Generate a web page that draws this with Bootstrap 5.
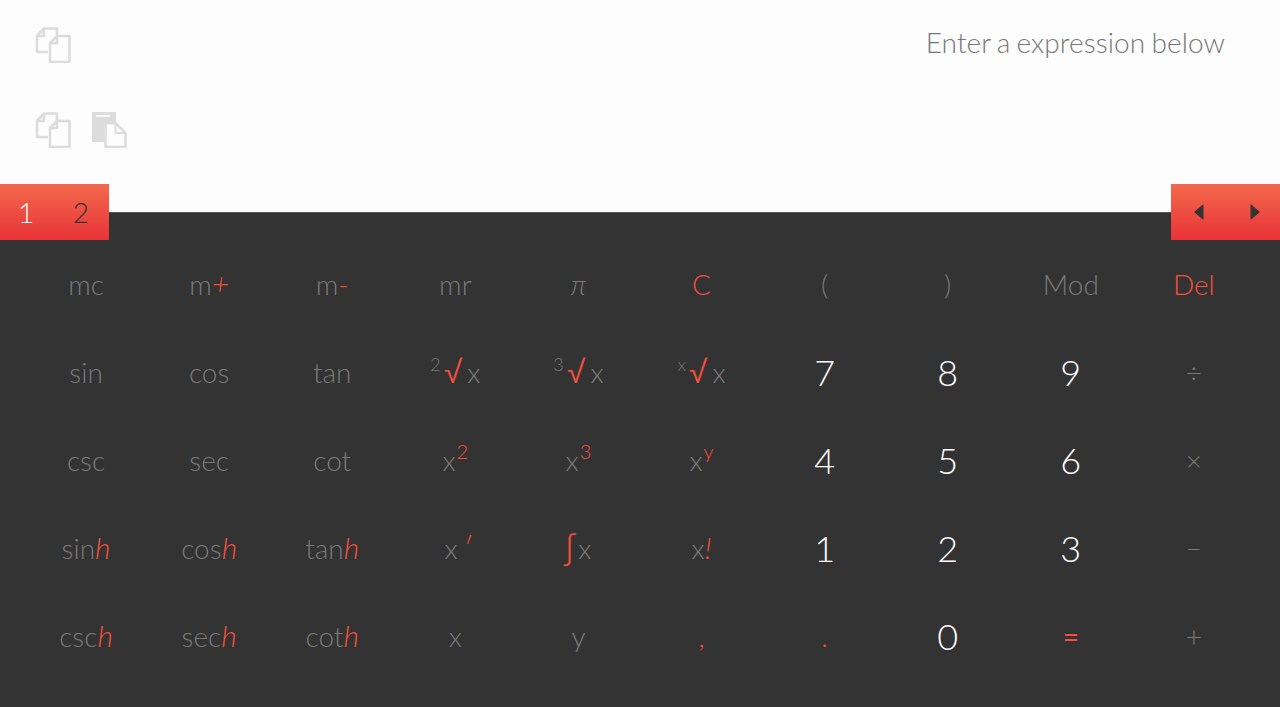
<!DOCTYPE html>
<html lang="en">
<head>
<meta charset="utf-8">
<title>Calculator</title>
<link href="https://cdn.jsdelivr.net/npm/bootstrap@5.3.0/dist/css/bootstrap.min.css" rel="stylesheet">
<style>
html,body{height:100%;margin:0;overflow:hidden}
body{font-family:"Lato",sans-serif;font-weight:300;background:#333}
.top-panel{height:212px;background:#fdfdfd;padding:27px 55px 0 35px}
.tool-stack{gap:49px}
.tool-row{gap:20px;height:36px}
.tool-row svg{width:36px;height:36px;display:block}
.prompt{font-size:28px;line-height:30px;color:#777;letter-spacing:.1px;word-spacing:-1.6px}
.dark-panel{background:#333;border-top:1px solid #555;height:495px}
.tab-strip{margin-top:-29px;height:56px;position:relative}
.tab-box{width:109px;height:56px;background:linear-gradient(#f2694c,#e93338);font-size:28px;padding:0 20px 0 18px;color:#333}
.tab-box.right{padding:0 20px 0 23px;margin:0}
.tab-on{color:#fff}
.keys{display:grid;grid-template-columns:repeat(10,123.1px);grid-auto-rows:88px;padding:0 0 0 24.5px}
.key{font-size:28px;color:#7a7a7a;white-space:nowrap;position:relative}
.key i{font-style:italic;font-weight:300;font-size:30px;line-height:1;color:#f4503a}
.red{color:#f4503a}
.key.num{color:#fff;font-size:36px}
.sup{font-size:20px;line-height:1;position:relative;top:-12px;margin-left:1px}
.sup-g{font-size:18px;line-height:1;position:relative;top:-12px;color:#7a7a7a;margin-right:3px}
.rt{font-family:"Roboto",sans-serif;font-size:36px;font-weight:300;line-height:1;margin-right:4px}
.intg{font-family:"Roboto",sans-serif;font-size:34px;font-weight:300;line-height:1;margin-right:4px}
.key i.prime{margin:0 -5px 0 5px}
.small-op{font-size:28px}
.eq-key{font-weight:400}
</style>
</head>
<body>
<div class="top-panel d-flex justify-content-between">
  <div class="d-flex flex-column tool-stack">
    <div class="d-flex tool-row">
      <svg viewBox="0 0 36 36" fill="none" stroke="#dcdcdc" stroke-width="2.600" stroke-linejoin="round"><path d="M13 25H2V9l7-7.500h13V9"/><path d="M2 9h7V2"/><path d="M15 16l7-7h12.500v26H15z"/><path d="M15 16h7V9"/></svg>
    </div>
    <div class="d-flex tool-row">
      <svg viewBox="0 0 36 36" fill="none" stroke="#dcdcdc" stroke-width="2.600" stroke-linejoin="round"><path d="M13 25H2V9l7-7.500h13V9"/><path d="M2 9h7V2"/><path d="M15 16l7-7h12.500v26H15z"/><path d="M15 16h7V9"/></svg>
      <svg viewBox="0 0 36 36"><path fill="#dcdcdc" d="M1 0h24v10H13.500v20H1z"/><rect x="5" y="3" width="14" height="1.800" fill="#fdfdfd"/><path fill="#fdfdfd" stroke="#dcdcdc" stroke-width="2.600" stroke-linejoin="round" d="M14.500 11h10l10 10v14h-20z"/><path fill="none" stroke="#dcdcdc" stroke-width="2" d="M24.500 11v10h10"/></svg>
    </div>
  </div>
  <div class="prompt">Enter a expression below</div>
</div>
<div class="dark-panel">
  <div class="tab-strip d-flex justify-content-between">
    <div class="tab-box d-flex justify-content-between align-items-center"><span class="tab-on">1</span><span>2</span></div>
    <div class="tab-box right d-flex justify-content-between align-items-center">
      <svg width="10" height="16" viewBox="0 0 10 16"><path fill="#333" d="M9.500 0v16L0 8z"/></svg>
      <svg width="10" height="16" viewBox="0 0 10 16"><path fill="#333" d="M.5 0v16L10 8z"/></svg>
    </div>
  </div>
  <div class="keys">
    <div class="key d-flex justify-content-center align-items-center">mc</div>
    <div class="key d-flex justify-content-center align-items-center"><span>m<i>+</i></span></div>
    <div class="key d-flex justify-content-center align-items-center"><span>m<span class="red">-</span></span></div>
    <div class="key d-flex justify-content-center align-items-center">mr</div>
    <div class="key d-flex justify-content-center align-items-center"><em>π</em></div>
    <div class="key red d-flex justify-content-center align-items-center">C</div>
    <div class="key d-flex justify-content-center align-items-center">(</div>
    <div class="key d-flex justify-content-center align-items-center">)</div>
    <div class="key d-flex justify-content-center align-items-center">Mod</div>
    <div class="key red d-flex justify-content-center align-items-center">Del</div>

    <div class="key d-flex justify-content-center align-items-center">sin</div>
    <div class="key d-flex justify-content-center align-items-center">cos</div>
    <div class="key d-flex justify-content-center align-items-center">tan</div>
    <div class="key d-flex justify-content-center align-items-center"><span><span class="sup-g">2</span><span class="rt red">√</span>x</span></div>
    <div class="key d-flex justify-content-center align-items-center"><span><span class="sup-g">3</span><span class="rt red">√</span>x</span></div>
    <div class="key d-flex justify-content-center align-items-center"><span><span class="sup-g">x</span><span class="rt red">√</span>x</span></div>
    <div class="key num d-flex justify-content-center align-items-center">7</div>
    <div class="key num d-flex justify-content-center align-items-center">8</div>
    <div class="key num d-flex justify-content-center align-items-center">9</div>
    <div class="key small-op d-flex justify-content-center align-items-center">÷</div>

    <div class="key d-flex justify-content-center align-items-center">csc</div>
    <div class="key d-flex justify-content-center align-items-center">sec</div>
    <div class="key d-flex justify-content-center align-items-center">cot</div>
    <div class="key d-flex justify-content-center align-items-center"><span>x<span class="sup red">2</span></span></div>
    <div class="key d-flex justify-content-center align-items-center"><span>x<span class="sup red">3</span></span></div>
    <div class="key d-flex justify-content-center align-items-center"><span>x<span class="sup red">y</span></span></div>
    <div class="key num d-flex justify-content-center align-items-center">4</div>
    <div class="key num d-flex justify-content-center align-items-center">5</div>
    <div class="key num d-flex justify-content-center align-items-center">6</div>
    <div class="key small-op d-flex justify-content-center align-items-center">×</div>

    <div class="key d-flex justify-content-center align-items-center"><span>sin<i>h</i></span></div>
    <div class="key d-flex justify-content-center align-items-center"><span>cos<i>h</i></span></div>
    <div class="key d-flex justify-content-center align-items-center"><span>tan<i>h</i></span></div>
    <div class="key d-flex justify-content-center align-items-center"><span>x<i class="prime">′</i></span></div>
    <div class="key d-flex justify-content-center align-items-center"><span><span class="intg red">∫</span>x</span></div>
    <div class="key d-flex justify-content-center align-items-center"><span>x<i>!</i></span></div>
    <div class="key num d-flex justify-content-center align-items-center">1</div>
    <div class="key num d-flex justify-content-center align-items-center">2</div>
    <div class="key num d-flex justify-content-center align-items-center">3</div>
    <div class="key small-op d-flex justify-content-center align-items-center">−</div>

    <div class="key d-flex justify-content-center align-items-center"><span>csc<i>h</i></span></div>
    <div class="key d-flex justify-content-center align-items-center"><span>sec<i>h</i></span></div>
    <div class="key d-flex justify-content-center align-items-center"><span>cot<i>h</i></span></div>
    <div class="key d-flex justify-content-center align-items-center">x</div>
    <div class="key d-flex justify-content-center align-items-center">y</div>
    <div class="key red d-flex justify-content-center align-items-center">,</div>
    <div class="key red d-flex justify-content-center align-items-center">.</div>
    <div class="key num d-flex justify-content-center align-items-center">0</div>
    <div class="key red small-op eq-key d-flex justify-content-center align-items-center">=</div>
    <div class="key small-op d-flex justify-content-center align-items-center">+</div>
  </div>
</div>
</body>
</html>
